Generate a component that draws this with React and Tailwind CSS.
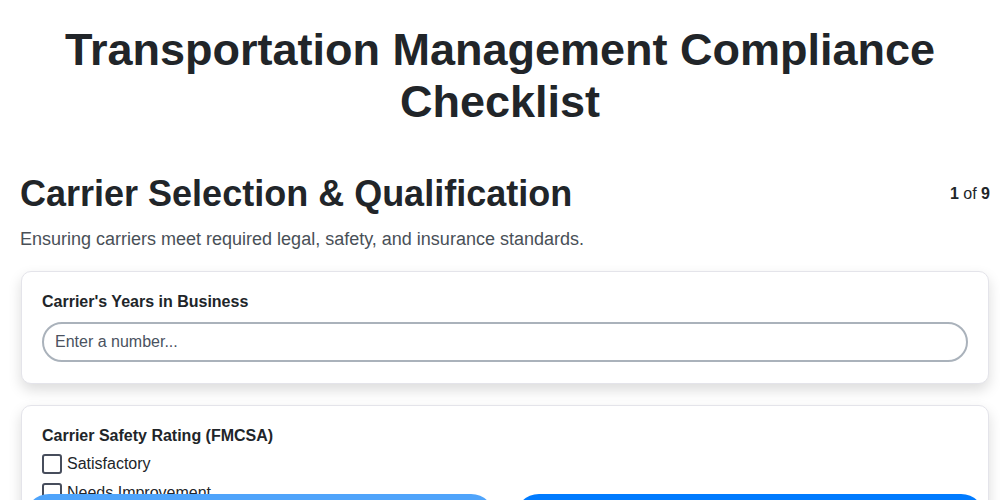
import { useState } from 'react';

const ratings = ['Satisfactory', 'Needs Improvement', 'Conditional', 'Unsatisfactory', 'Not Rated'];

function Card({ children }) {
  return (
    <div className="rounded-[10px] border border-[#e4e4ea] bg-white px-5 pt-5 pb-[21px] shadow-[0_6px_14px_rgba(0,0,0,0.14)]">
      {children}
    </div>
  );
}

export default function App() {
  const [years, setYears] = useState('');
  const [checked, setChecked] = useState({});

  return (
    <div className="h-screen overflow-y-auto bg-white font-['Liberation_Sans',Arial,sans-serif] text-[#212529] [scrollbar-width:none]">
      <div className="pb-32">
        <h1 className="mx-auto mt-6 max-w-[920px] text-center text-[45px] font-bold leading-[52px]">
          Transportation Management Compliance Checklist
        </h1>

        <div className="pl-5 pr-[10px]">
          <div className="mt-[44px] flex items-center justify-between">
            <h2 className="text-[36px] font-bold leading-[44px]">Carrier Selection &amp; Qualification</h2>
            <span className="text-[16px]">
              <b>1</b> of <b>9</b>
            </span>
          </div>
          <p className="mt-[10px] text-[18px] leading-[26px] text-[#495057]">
            Ensuring carriers meet required legal, safety, and insurance standards.
          </p>

          <div className="mt-[19px] flex flex-col gap-[21px] px-px">
            <Card>
              <label className="block text-[16px] font-bold leading-[20px]">Carrier's Years in Business</label>
              <input
                type="number"
                value={years}
                onChange={(e) => setYears(e.target.value)}
                placeholder="Enter a number..."
                className="mt-[10px] h-10 w-full rounded-full border-2 border-[#aab2bb] px-[11px] text-[16px] text-[#212529] outline-none placeholder:text-[#4a5260]"
              />
            </Card>

            <Card>
              <label className="block text-[16px] font-bold leading-[20px]">Carrier Safety Rating (FMCSA)</label>
              <div className="mt-2 flex flex-col gap-[9px]">
                {ratings.map((r) => (
                  <label key={r} className="flex items-center gap-[5px] text-[16px] leading-[20px]">
                    <input
                      type="checkbox"
                      checked={!!checked[r]}
                      onChange={() => setChecked({ ...checked, [r]: !checked[r] })}
                      className="h-5 w-5 appearance-none rounded-[3px] border-2 border-[#474d5c] bg-white"
                    />
                    <span>{r}</span>
                  </label>
                ))}
              </div>
            </Card>
          </div>
        </div>
      </div>

      {/* nav buttons */}
      <div className="fixed left-0 right-0 top-[494px] flex gap-5 pl-[25px] pr-[15px]">
        <button className="h-12 flex-1 rounded-full bg-[#4fa4fb] text-[16px] font-bold text-white">Previous</button>
        <button className="h-12 flex-1 rounded-full bg-[#007bff] text-[16px] font-bold text-white">Next</button>
      </div>
    </div>
  );
}
